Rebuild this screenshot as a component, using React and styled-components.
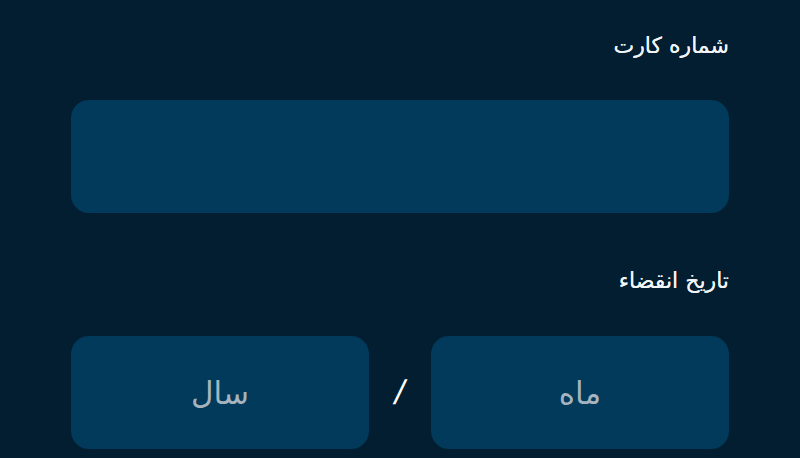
import React from "react";
import styled, { createGlobalStyle } from "styled-components";

const GlobalStyle = createGlobalStyle`
    html, body {
        margin: 0;
        padding: 0;
        background-color: #021e30;
    }
    body {
        font-family: "DejaVu Sans", "Noto Sans", sans-serif;
    }
`;

const App = () => {
    return (
        <>
            <GlobalStyle />
            <Page>
                <Form dir="rtl">
                    <Label>شماره کارت</Label>
                    <Field />
                    <Label $top={52}>تاریخ انقضاء</Label>
                    <ExpiryRow>
                        <Field $half>
                            <Placeholder>ماه</Placeholder>
                        </Field>
                        <Slash>/</Slash>
                        <Field $half>
                            <Placeholder>سال</Placeholder>
                        </Field>
                    </ExpiryRow>
                </Form>
            </Page>
        </>
    );
};

export default App;

const Page = styled.div`
    width: 800px;
    height: 458px;
    overflow: hidden;
    background-color: #021e30;
    display: flex;
    justify-content: center;
`;

const Form = styled.div`
    width: 658px;
    padding-top: 30px;
    display: flex;
    flex-direction: column;
`;

const Label = styled.div`
    height: 32px;
    line-height: 32px;
    margin-top: ${(p) => (p.$top ? p.$top + "px" : "0")};
    font-size: 22px;
    color: #f2f5f7;
    text-shadow: 0 0 0.4px #f2f5f7;
`;

const Field = styled.div`
    width: ${(p) => (p.$half ? "298px" : "100%")};
    height: 113px;
    flex-shrink: 0;
    margin-top: ${(p) => (p.$half ? "0" : "38px")};
    background-color: #013a5b;
    border-radius: 18px;
    display: flex;
    align-items: center;
    justify-content: center;
`;

const ExpiryRow = styled.div`
    margin-top: 39px;
    display: flex;
    align-items: center;
    justify-content: space-between;
`;

const Placeholder = styled.span`
    font-size: 31px;
    color: #a6b4bf;
`;

const Slash = styled.span`
    font-family: "Liberation Sans", sans-serif;
    font-size: 34px;
    color: #ffffff;
    width: 62px;
    text-align: center;
    transform: skewX(-12deg);
`;
